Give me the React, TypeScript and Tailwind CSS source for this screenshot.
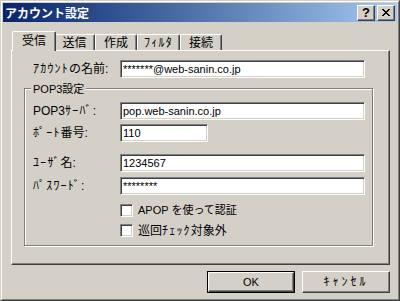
import { clsx } from 'clsx'

const tabs = ['受信', '送信', '作成', 'ﾌｨﾙﾀ', '接続']
const tabWidths = ['w-[44px]', 'w-[41px]', 'w-[42px]', 'w-[43px]', 'w-[42px]']

// half-width katakana runs get a little extra spacing, like the old bitmap UI font
function Jp({ text }: { text: string }) {
  return (
    <>
      {text.split(/([\uFF61-\uFF9F]+)/).map((part, i) =>
        /^[\uFF61-\uFF9F]+$/.test(part) ? (
          <span key={i} className="tracking-[1.2px]">
            {part}
          </span>
        ) : (
          part
        ),
      )}
    </>
  )
}

function CloseGlyph() {
  const rows = ['##....##', '.##..##.', '..####..', '...##...', '..####..', '.##..##.', '##....##']
  return (
    <svg width="8" height="7" viewBox="0 0 8 7" shapeRendering="crispEdges">
      {rows.flatMap((row, y) =>
        row.split('').map((c, x) => (c === '#' ? <rect key={`${x}-${y}`} x={x} y={y} width="1" height="1" fill="#000" /> : null)),
      )}
    </svg>
  )
}

function TitleButton({ children }: { children: React.ReactNode }) {
  return (
    <div className="flex h-[16px] w-[18px] items-center justify-center border border-t-white border-l-white border-r-[#404040] border-b-[#404040] bg-[#d4d0c8] shadow-[inset_-1px_-1px_0_#808080]">
      {children}
    </div>
  )
}

function Field({ value, width = 'w-[245px]' }: { value: string; width?: string }) {
  return (
    <div
      className={clsx(
        'flex h-[18px] items-center border border-t-[#808080] border-l-[#808080] border-r-white border-b-white bg-white pl-[2px] text-[11px] shadow-[inset_1px_1px_0_#404040,inset_-1px_-1px_0_#d4d0c8]',
        width,
      )}
    >
      <span className="leading-none">{value}</span>
    </div>
  )
}

function Row({ label, value, width, className }: { label: string; value: string; width?: string; className?: string }) {
  return (
    <div className={clsx('flex items-center', className)}>
      <span className="w-[87px] shrink-0">
        <Jp text={label} />
      </span>
      <Field value={value} width={width} />
    </div>
  )
}

function Check({ label, className }: { label: string; className?: string }) {
  return (
    <div className={clsx('ml-[95px] flex h-[13px] items-center gap-[5px]', className)}>
      <span className="h-[13px] w-[13px] shrink-0 border border-t-[#808080] border-l-[#808080] border-r-white border-b-white bg-white shadow-[inset_1px_1px_0_#404040,inset_-1px_-1px_0_#d4d0c8]" />
      <span>
        <Jp text={label} />
      </span>
    </div>
  )
}

function Button({ label, isDefault, className }: { label: string; isDefault?: boolean; className?: string }) {
  return (
    <div className={clsx('h-[22px] w-[88px]', isDefault && 'border border-black')}>
      <div
        className={clsx(
          'flex h-full w-full items-center justify-center border border-t-white border-l-white border-r-[#404040] border-b-[#404040] shadow-[inset_-1px_-1px_0_#808080]',
          className,
        )}
      >
        {label}
      </div>
    </div>
  )
}

export default function App() {
  return (
    <div
      lang="ja"
      className="h-[301px] w-[400px] border border-t-[#d4d0c8] border-l-[#d4d0c8] border-r-[#404040] border-b-[#404040] bg-[#d4d0c8] font-['Liberation_Sans','Noto_Sans_CJK_JP',sans-serif] text-[12px] text-black"
    >
      <div className="flex h-full flex-col border border-t-white border-l-white border-r-[#808080] border-b-[#808080] p-px">
        <div className="flex h-[19px] shrink-0 items-center bg-gradient-to-r from-[#0a246a] to-[#a6caf0] pl-[2px] pr-[2px]">
          <span className="font-['Noto_Sans_CJK_JP',sans-serif] text-[12px] font-bold text-white">アカウント設定</span>
          <div className="ml-auto flex gap-[2px]">
            <TitleButton>
              <span className="font-['Liberation_Sans',sans-serif] text-[13px] font-bold leading-none">?</span>
            </TitleButton>
            <TitleButton>
              <CloseGlyph />
            </TitleButton>
          </div>
        </div>

        <div className="flex flex-1 flex-col pl-[8px] pr-[6px] pt-[9px]">
          <div className="flex h-[19px] items-end pl-[3px]">
            {tabs.map((t, i) => (
              <div
                key={t}
                className={clsx(
                  'flex items-center justify-center rounded-t-[2px] border-l border-t border-r border-l-white border-t-white border-r-[#404040] bg-[#d4d0c8] shadow-[inset_-1px_0_0_#808080]',
                  tabWidths[i],
                  i === 0 ? 'relative z-10 -mx-[2px] -mb-px h-[20px] pb-[2px]' : 'h-[16px]',
                )}
              >
                <Jp text={t} />
              </div>
            ))}
          </div>

          <div className="flex h-[215px] w-[379px] flex-col border border-t-white border-l-white border-r-[#404040] border-b-[#404040] shadow-[inset_-1px_-1px_0_#808080]">
            <Row label="ｱｶｳﾝﾄの名前:" value="*******@web-sanin.co.jp" className="ml-[21px] mt-[9px]" />

            <div className="relative ml-[12px] mt-[10px] h-[158px] w-[349px] border border-[#808080] shadow-[inset_1px_1px_0_#fff,1px_1px_0_#fff]">
              <span className="absolute -top-[8px] left-[6px] bg-[#d4d0c8] px-[2px] text-[11px]">POP3設定</span>
              <div className="ml-[8px] flex flex-col pt-[13px]">
                <Row label="POP3ｻｰﾊﾞ:" value="pop.web-sanin.co.jp" />
                <Row label="ﾎﾟｰﾄ番号:" value="110" width="w-[88px]" className="mt-[4px]" />
                <Row label="ﾕｰｻﾞ名:" value="1234567" className="mt-[12px]" />
                <Row label="ﾊﾟｽﾜｰﾄﾞ:" value="********" className="mt-[5px]" />
              </div>
              <Check label="APOP を使って認証" className="mt-[9px] text-[11px]" />
              <Check label="巡回ﾁｪｯｸ対象外" className="mt-[7px]" />
            </div>
          </div>

          <div className="mt-[6px] flex justify-end gap-[7px] pr-px">
            <Button label="OK" isDefault className="text-[11px]" />
            <Button label="ｷｬﾝｾﾙ" className="tracking-[3px]" />
          </div>
        </div>
      </div>
    </div>
  )
}
